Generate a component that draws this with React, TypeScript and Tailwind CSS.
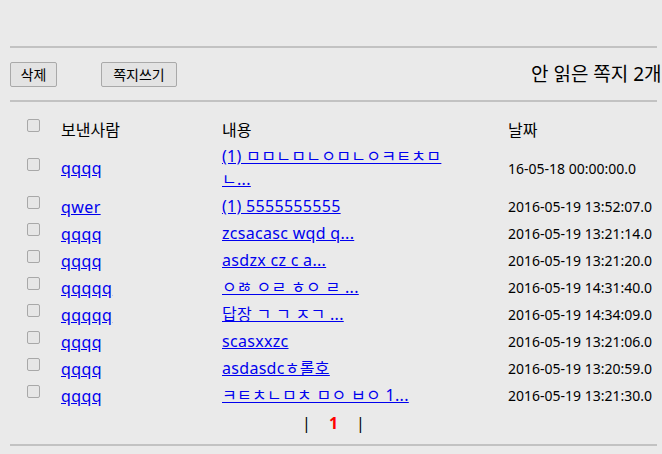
import React from "react";

const rows: { name: string; content: React.ReactNode; date: string; two?: boolean }[] = [
  {
    name: "qqqq",
    content: (
      <>
        (1) ㅁㅁㄴㅁㄴㅇㅁㄴㅇㅋㅌㅊㅁ
        <br />
        ㄴ...
      </>
    ),
    date: "16-05-18 00:00:00.0",
    two: true,
  },
  { name: "qwer", content: "(1) 5555555555", date: "2016-05-19 13:52:07.0" },
  { name: "qqqq", content: "zcsacasc wqd q...", date: "2016-05-19 13:21:14.0" },
  { name: "qqqq", content: "asdzx cz c a...", date: "2016-05-19 13:21:20.0" },
  { name: "qqqqq", content: "ㅇㅀ ㅇㄹ ㅎㅇ ㄹ ...", date: "2016-05-19 14:31:40.0" },
  { name: "qqqqq", content: "답장 ㄱ ㄱ ㅈㄱ ...", date: "2016-05-19 14:34:09.0" },
  { name: "qqqq", content: "scasxxzc", date: "2016-05-19 13:21:06.0" },
  { name: "qqqq", content: "asdasdcㅎ롤호", date: "2016-05-19 13:20:59.0" },
  { name: "qqqq", content: "ㅋㅌㅊㄴㅁㅊ ㅁㅇ ㅂㅇ 1...", date: "2016-05-19 13:21:30.0" },
];

function Box() {
  return (
    <span className="mb-2 block h-[13px] w-[13px] rounded-[2px] border border-[#a8a8a8] bg-[#e6e6e6]" />
  );
}

export default function App() {
  return (
    <div
      className="h-[454px] w-[662px] overflow-hidden bg-[#eaeaea] text-black"
      style={{ fontFamily: "'Noto Sans', 'Noto Sans CJK KR', sans-serif" }}
    >
      <div className="pl-[10px] pr-[5px] pt-[46px]">
        <div className="h-[2px] bg-[#c2c2c2]" />
        <div className="mt-[14px] flex h-[25px] items-center whitespace-nowrap">
          <button className="h-[25px] w-[47px] shrink-0 rounded-[2px] border border-[#a9a9a9] bg-[#e3e3e3] text-[14px] leading-none">
            삭제
          </button>
          <button className="ml-[44px] h-[25px] w-[76px] shrink-0 rounded-[2px] border border-[#a9a9a9] bg-[#e3e3e3] text-[14px] leading-none">
            쪽지쓰기
          </button>
          <span className="ml-[354px] shrink-0 text-[19px]">안 읽은 쪽지 2개</span>
        </div>
        <div className="mt-[13px] h-[2px] bg-[#c2c2c2]" />

        <div className="mt-[14px] text-[16px]">
          <div className="grid h-[27px] grid-cols-[51px_161px_286px_1fr] items-center">
            <div className="pl-[17px]">
              <Box />
            </div>
            <div>보낸사람</div>
            <div>내용</div>
            <div>날짜</div>
          </div>
          {rows.map((r, i) => (
            <div
              key={i}
              className={`grid grid-cols-[51px_161px_286px_1fr] items-center ${r.two ? "h-[50px]" : "h-[27px]"}`}
            >
              <div className="pl-[17px]">
                <Box />
              </div>
              <div>
                <a className="text-[#0000ee] underline leading-[23px] tracking-[0.4px]">{r.name}</a>
              </div>
              <div className="leading-[23px]">
                <a className="text-[#0000ee] underline tracking-[0.3px]">{r.content}</a>
              </div>
              <div className="whitespace-nowrap text-[14px]">{r.date}</div>
            </div>
          ))}
          <div className="flex h-[27px] items-center justify-center gap-[18px]">
            <span>|</span>
            <span className="font-bold text-[#ff0000]">1</span>
            <span>|</span>
          </div>
        </div>
        <div className="mt-[8px] h-[2px] bg-[#c2c2c2]" />
      </div>
    </div>
  );
}
